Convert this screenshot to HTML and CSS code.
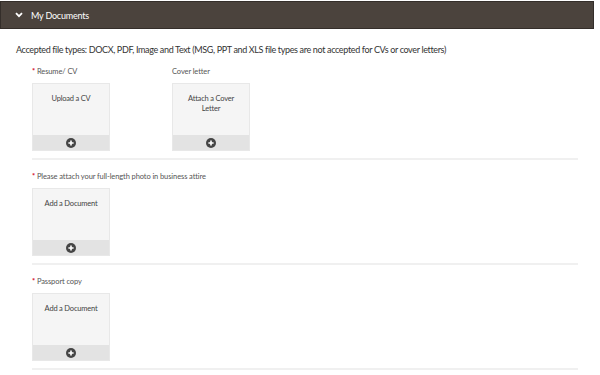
FILE: index.html
```html
<!DOCTYPE html>
<html>
<head>
    <meta charset="UTF-8">
    <title>My Documents</title>
    <link rel="stylesheet" href="styles.css">
</head>
<body>
    <div class="panel-header">
        <svg class="chevron" width="8" height="6" viewBox="0 0 8 6"><path d="M1 1.2 L4 4.2 L7 1.2" fill="none" stroke="#ffffff" stroke-width="1.8"/></svg>
        <span>My Documents</span>
    </div>

    <p class="intro">Accepted file types: DOCX, PDF, Image and Text (MSG, PPT and XLS file types are not accepted for CVs or cover letters)</p>

    <div class="doc-section">
        <div class="field-row">
            <div class="field">
                <div class="field-label"><span class="required">*</span> Resume/ CV</div>
                <div class="upload-box">
                    <div class="box-title">Upload a CV</div>
                    <div class="box-footer">
                        <svg width="10" height="10" viewBox="0 0 10 10"><circle cx="5" cy="5" r="5" fill="#454545"/><path d="M5 2.4 V7.6 M2.4 5 H7.6" stroke="#ffffff" stroke-width="1.6"/></svg>
                    </div>
                </div>
            </div>
            <div class="field">
                <div class="field-label">Cover letter</div>
                <div class="upload-box">
                    <div class="box-title">Attach a Cover Letter</div>
                    <div class="box-footer">
                        <svg width="10" height="10" viewBox="0 0 10 10"><circle cx="5" cy="5" r="5" fill="#454545"/><path d="M5 2.4 V7.6 M2.4 5 H7.6" stroke="#ffffff" stroke-width="1.6"/></svg>
                    </div>
                </div>
            </div>
        </div>
    </div>

    <div class="doc-section">
        <div class="field">
            <div class="field-label"><span class="required">*</span> Please attach your full-length photo in business attire</div>
            <div class="upload-box">
                <div class="box-title">Add a Document</div>
                <div class="box-footer">
                    <svg width="10" height="10" viewBox="0 0 10 10"><circle cx="5" cy="5" r="5" fill="#454545"/><path d="M5 2.4 V7.6 M2.4 5 H7.6" stroke="#ffffff" stroke-width="1.6"/></svg>
                </div>
            </div>
        </div>
    </div>

    <div class="doc-section">
        <div class="field">
            <div class="field-label"><span class="required">*</span> Passport copy</div>
            <div class="upload-box">
                <div class="box-title">Add a Document</div>
                <div class="box-footer">
                    <svg width="10" height="10" viewBox="0 0 10 10"><circle cx="5" cy="5" r="5" fill="#454545"/><path d="M5 2.4 V7.6 M2.4 5 H7.6" stroke="#ffffff" stroke-width="1.6"/></svg>
                </div>
            </div>
        </div>
    </div>
</body>
</html>
```

FILE: styles.css
```css
body {
    font-family: Lato, "Open Sans", sans-serif;
    background-color: #ffffff;
    color: #3a3a3a;
    margin: 0;
}
.panel-header {
    display: flex;
    align-items: center;
    height: 26px;
    margin: 1px 6px 0 0;
    padding-left: 14px;
    background-color: #4b433d;
    border: 1px solid #342e2a;
    color: #ffffff;
    font-size: 9px;
    letter-spacing: -0.2px;
}
.chevron {
    margin-right: 8px;
}
.intro {
    margin: 14px 0 0 16px;
    font-size: 9px;
    letter-spacing: -0.35px;
    line-height: 14px;
    color: #333333;
}
.doc-section {
    margin: 0 22px 0 32px;
    padding: 10px 0 7px;
    border-bottom: 2px solid #f0f0f0;
}
.doc-section + .doc-section {
    padding-top: 12px;
}
.field-row {
    display: flex;
    gap: 62px;
}
.field-label {
    font-size: 7.5px;
    letter-spacing: -0.1px;
    line-height: 10px;
    color: #555555;
    margin-bottom: 6px;
}
.required {
    color: #d0021b;
    font-weight: bold;
}
.upload-box {
    display: flex;
    flex-direction: column;
    width: 76px;
    height: 66px;
    background-color: #f5f5f5;
    border: 1px solid #e8e8e8;
}
.box-title {
    flex: 1;
    padding: 10px 8px 0;
    text-align: center;
    font-size: 7.5px;
    letter-spacing: -0.2px;
    line-height: 10px;
    color: #444444;
}
.box-footer {
    display: flex;
    align-items: center;
    justify-content: center;
    height: 15px;
    background-color: #e3e3e3;
}
```
